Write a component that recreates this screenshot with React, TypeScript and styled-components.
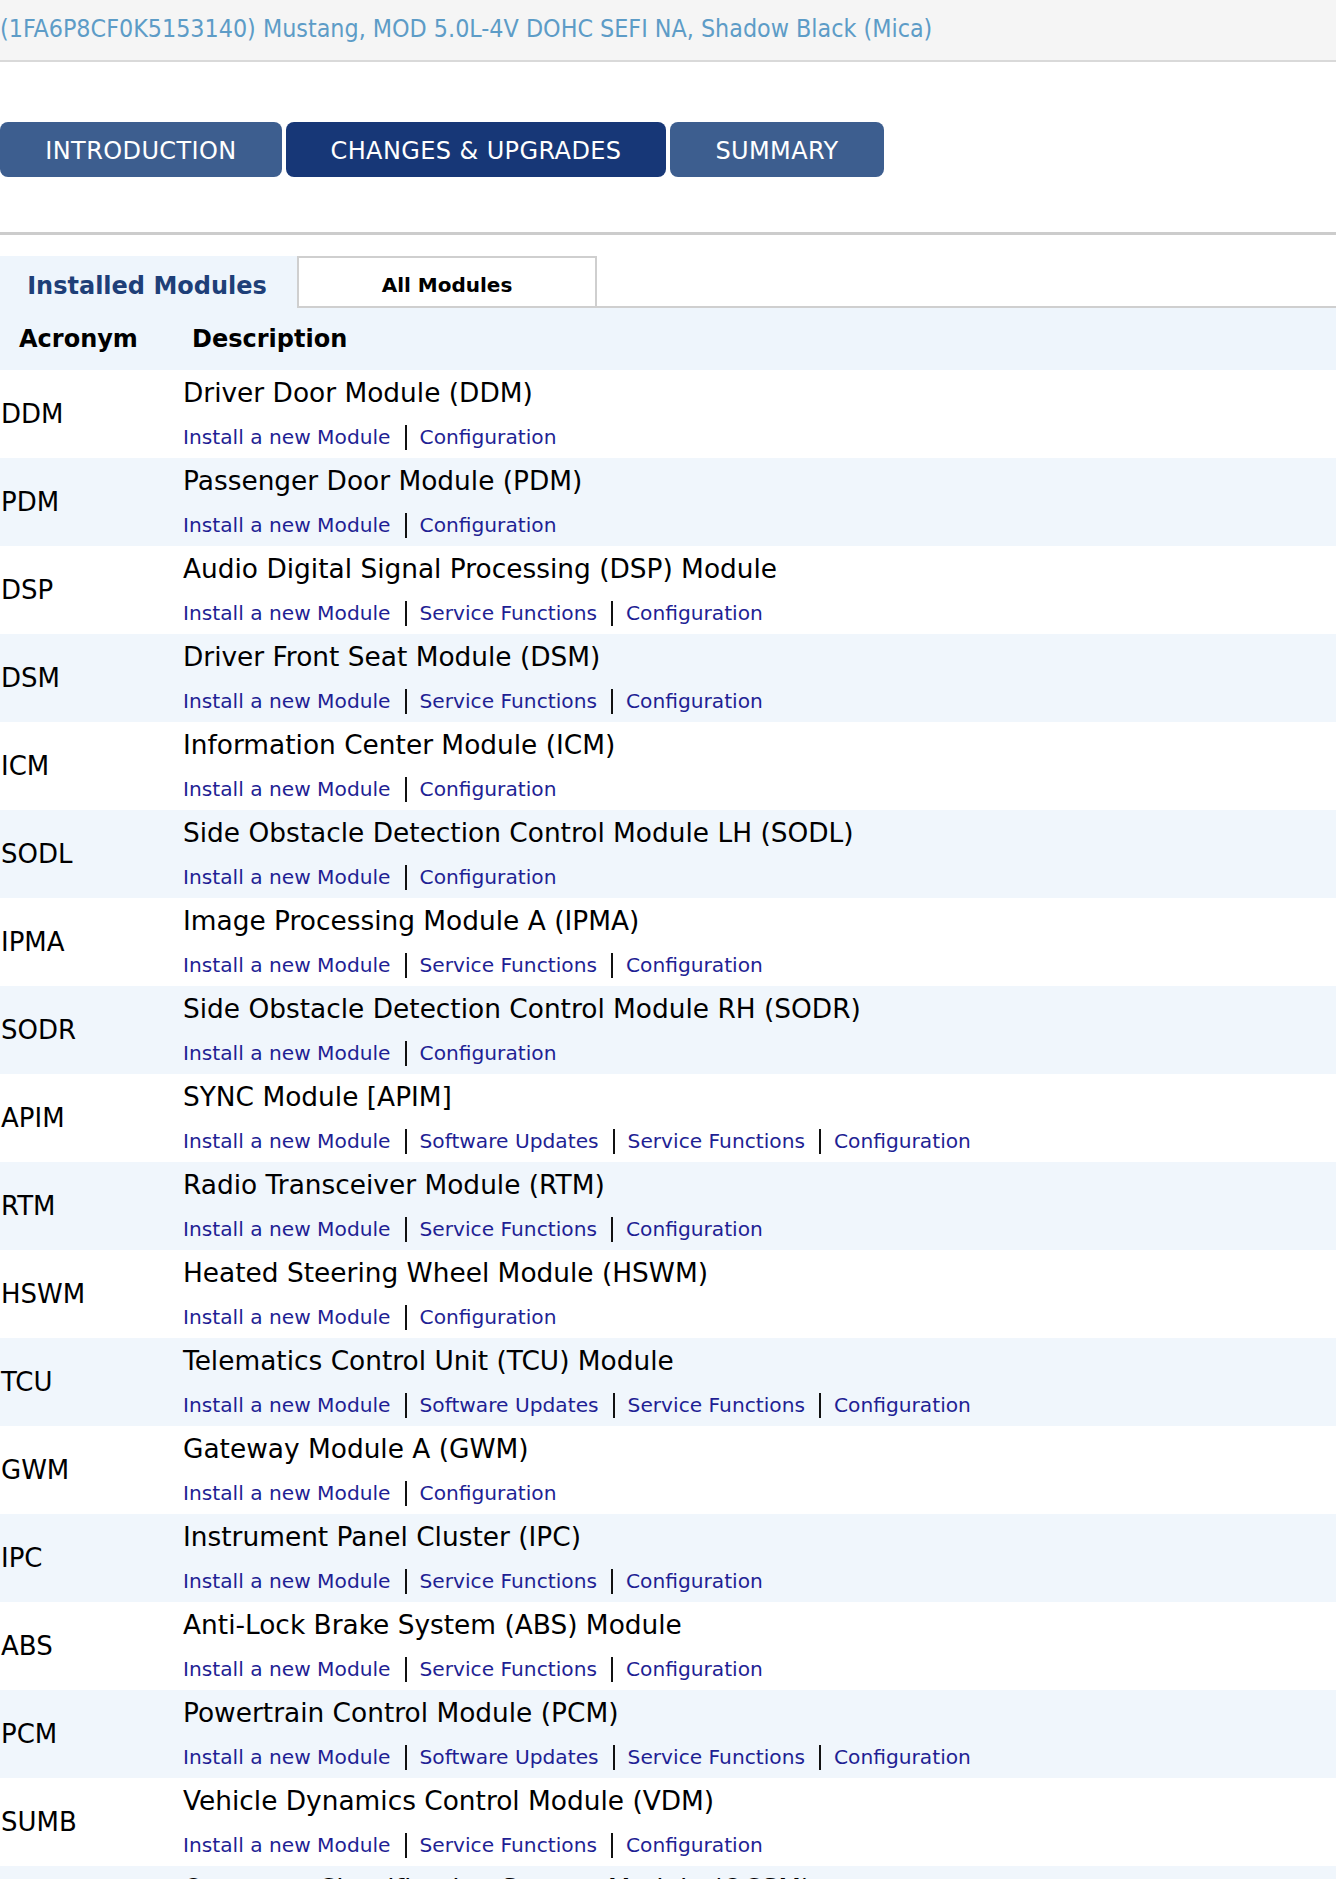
import React from 'react';
import styled, {createGlobalStyle} from 'styled-components';

type LinkKind = 'install' | 'software' | 'service' | 'config';

interface ModuleRow {
    acronym: string;
    title: string;
    links: LinkKind[];
}

const LINK_LABELS: Record<LinkKind, string> = {
    install: 'Install a new Module',
    software: 'Software Updates',
    service: 'Service Functions',
    config: 'Configuration',
};

const IC: LinkKind[] = ['install', 'config'];
const ISC: LinkKind[] = ['install', 'service', 'config'];
const IWSC: LinkKind[] = ['install', 'software', 'service', 'config'];

const modules: ModuleRow[] = [
    {acronym: 'DDM', title: 'Driver Door Module (DDM)', links: IC},
    {acronym: 'PDM', title: 'Passenger Door Module (PDM)', links: IC},
    {acronym: 'DSP', title: 'Audio Digital Signal Processing (DSP) Module', links: ISC},
    {acronym: 'DSM', title: 'Driver Front Seat Module (DSM)', links: ISC},
    {acronym: 'ICM', title: 'Information Center Module (ICM)', links: IC},
    {acronym: 'SODL', title: 'Side Obstacle Detection Control Module LH (SODL)', links: IC},
    {acronym: 'IPMA', title: 'Image Processing Module A (IPMA)', links: ISC},
    {acronym: 'SODR', title: 'Side Obstacle Detection Control Module RH (SODR)', links: IC},
    {acronym: 'APIM', title: 'SYNC Module [APIM]', links: IWSC},
    {acronym: 'RTM', title: 'Radio Transceiver Module (RTM)', links: ISC},
    {acronym: 'HSWM', title: 'Heated Steering Wheel Module (HSWM)', links: IC},
    {acronym: 'TCU', title: 'Telematics Control Unit (TCU) Module', links: IWSC},
    {acronym: 'GWM', title: 'Gateway Module A (GWM)', links: IC},
    {acronym: 'IPC', title: 'Instrument Panel Cluster (IPC)', links: ISC},
    {acronym: 'ABS', title: 'Anti-Lock Brake System (ABS) Module', links: ISC},
    {acronym: 'PCM', title: 'Powertrain Control Module (PCM)', links: IWSC},
    {acronym: 'SUMB', title: 'Vehicle Dynamics Control Module (VDM)', links: ISC},
    {acronym: 'OCSM', title: 'Occupant Classification System Module (OCSM)', links: IC},
];

const GlobalStyle = createGlobalStyle`
  html, body {
    margin: 0;
    padding: 0;
    background: #fff;
    font-family: Verdana, "DejaVu Sans", sans-serif;
    overflow-x: hidden;
  }
`;

const Page = styled.div`
  display: flex;
  flex-direction: column;
  width: 1336px;
`;

const VehicleBar = styled.div`
  height: 62px;
  box-sizing: border-box;
  background: #f5f5f5;
  border-bottom: 2px solid #d9d9d9;
  display: flex;
  align-items: center;
  padding-bottom: 4px;
  font-family: Tahoma, "DejaVu Sans Condensed", "DejaVu Sans", sans-serif;
  font-size: 24.8px;
  color: #5d9cc7;
  white-space: nowrap;
`;

const SectionNav = styled.nav`
  display: flex;
  gap: 4px;
  margin-top: 60px;
`;

const SectionButton = styled.button<{$active?: boolean; $width: number}>`
  width: ${p => p.$width}px;
  height: 55px;
  border: none;
  border-radius: 8px;
  background: ${p => (p.$active ? '#173777' : '#3d5e8f')};
  color: #fff;
  font-family: Tahoma, "DejaVu Sans", sans-serif;
  font-size: 24px;
  letter-spacing: 0.4px;
  text-transform: uppercase;
  cursor: pointer;
  padding: 2px 0 0;
`;

const Rule = styled.hr`
  margin: 55px 0 0;
  border: none;
  height: 3px;
  background: #cccccc;
`;

const TabStrip = styled.div`
  display: flex;
  margin-top: 21px;
  height: 52px;
  border-bottom: 2px solid #cfcfcf;
  box-sizing: border-box;
`;

const ModuleTab = styled.div<{$active?: boolean; $width: number}>`
  width: ${p => p.$width}px;
  box-sizing: border-box;
  display: flex;
  align-items: center;
  justify-content: center;
  font-weight: bold;
  background: ${p => (p.$active ? '#eef5fc' : '#fff')};
  color: ${p => (p.$active ? '#1e3f78' : '#000')};
  font-size: ${p => (p.$active ? 24 : 20)}px;
  border: ${p => (p.$active ? 'none' : '2px solid #cfcfcf')};
  border-bottom: none;
  margin-bottom: ${p => (p.$active ? '-2px' : '0')};
  padding-top: ${p => (p.$active ? '7px' : '6px')};
  padding-right: ${p => (p.$active ? '3px' : '0')};
`;

const HeaderRow = styled.div`
  display: grid;
  grid-template-columns: 192px 1fr;
  align-items: center;
  height: 62px;
  background: #eef5fc;
  font-size: 24px;
  font-weight: bold;
  color: #000;

  & > span:first-child {
    padding-left: 19px;
  }
`;

const Row = styled.div<{$shade: boolean}>`
  display: grid;
  grid-template-columns: 183px 1fr;
  align-items: center;
  height: 88px;
  background: ${p => (p.$shade ? '#f0f6fc' : '#fff')};
`;

const Acronym = styled.div`
  font-size: 26px;
  color: #000;
  padding-left: 1px;
`;

const Details = styled.div`
  display: flex;
  flex-direction: column;
  gap: 17px;
  padding-bottom: 1px;
`;

const Title = styled.div`
  font-size: 26.4px;
  line-height: 30px;
  color: #000;
  white-space: nowrap;
`;

const LinkLine = styled.div`
  display: flex;
  align-items: center;
  font-size: 20.2px;
  line-height: 24px;
`;

const ActionLink = styled.a`
  color: #1f1f94;
  text-decoration: none;
  cursor: pointer;
`;

const Divider = styled.span`
  width: 2px;
  height: 25px;
  background: #111;
  margin: 0 13px 0 14px;
`;

const App = () => {
    return <Page>
        <GlobalStyle/>
        <VehicleBar>(1FA6P8CF0K5153140) Mustang, MOD 5.0L-4V DOHC SEFI NA, Shadow Black (Mica)</VehicleBar>

        <SectionNav>
            <SectionButton $width={282}>Introduction</SectionButton>
            <SectionButton $width={380} $active>Changes &amp; Upgrades</SectionButton>
            <SectionButton $width={214}>Summary</SectionButton>
        </SectionNav>

        <Rule/>

        <TabStrip>
            <ModuleTab $width={297} $active>Installed Modules</ModuleTab>
            <ModuleTab $width={300}>All Modules</ModuleTab>
        </TabStrip>

        <HeaderRow>
            <span>Acronym</span>
            <span>Description</span>
        </HeaderRow>

        {modules.map((row, index) => (
            <Row key={row.acronym} $shade={index % 2 === 1}>
                <Acronym>{row.acronym}</Acronym>
                <Details>
                    <Title>{row.title}</Title>
                    <LinkLine>
                        {row.links.map((kind, i) => (
                            <React.Fragment key={kind}>
                                {i > 0 && <Divider/>}
                                <ActionLink>{LINK_LABELS[kind]}</ActionLink>
                            </React.Fragment>
                        ))}
                    </LinkLine>
                </Details>
            </Row>
        ))}
    </Page>;
};

export default App;
